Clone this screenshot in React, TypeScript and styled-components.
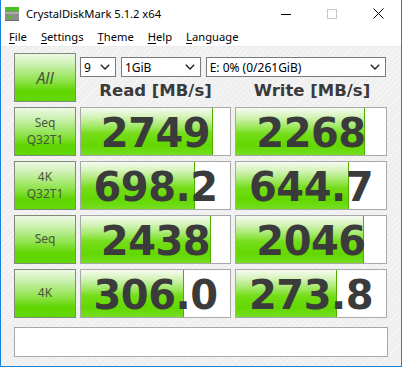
import React from "react";
import styled, { createGlobalStyle } from "styled-components";

const Global = createGlobalStyle`
  html, body { margin: 0; padding: 0; background: #ffffff; }
  body { font-family: "Noto Sans", "Open Sans", sans-serif; }
  * { box-sizing: border-box; }
`;

const Window = styled.div`
  width: 402px;
  height: 367px;
  display: flex;
  flex-direction: column;
  border: 1px solid #1883d7;
  border-top: none;
  background: #ffffff;
  overflow: hidden;
`;

const TitleBar = styled.div`
  height: 27px;
  display: flex;
  align-items: center;
  padding-left: 3px;
  background: #ffffff;
`;

const TitleText = styled.span`
  font-family: "Noto Sans", sans-serif;
  font-size: 11.2px;
  color: #000000;
  margin-left: 6px;
  margin-top: -1px;
  flex: 1;
`;

const Controls = styled.div`
  display: flex;
  height: 100%;
`;

const ControlBtn = styled.div`
  width: 46px;
  height: 100%;
  display: flex;
  align-items: center;
  justify-content: center;
`;

const MenuBar = styled.div`
  height: 20px;
  display: flex;
  align-items: center;
  padding-left: 1px;
  background: #ffffff;
  border-bottom: 1px solid #ececec;
`;

const MenuItem = styled.span`
  font-family: "Noto Sans", sans-serif;
  font-size: 11.2px;
  color: #000;
  padding: 0 7px;
  u { text-decoration: underline; text-underline-offset: 2px; }
`;

const Client = styled.div`
  flex: 1;
  padding: 6px 12px 0 13px;
  background-color: #f1f1f1;
  background-image: repeating-linear-gradient(
    135deg,
    #f6f6f6 0px,
    #f6f6f6 1px,
    #efefef 1px,
    #efefef 4px
  );
  display: flex;
  flex-direction: column;
`;

const Grid = styled.div`
  display: grid;
  grid-template-columns: 62px 151px 152px;
  grid-auto-rows: 49px;
  column-gap: 4px;
  row-gap: 5px;
`;

const TestButton = styled.div<{ $big?: boolean }>`
  border: 1px solid #7f8a78;
  background: linear-gradient(
    to bottom,
    #eef9e6 0%,
    #c8efaa 25%,
    #92e450 55%,
    #5fd500 80%,
    #62d80a 100%
  );
  display: flex;
  flex-direction: column;
  align-items: center;
  justify-content: center;
  font-family: "Noto Sans", sans-serif;
  font-size: ${(p) => (p.$big ? "16px" : "12px")};
  font-style: ${(p) => (p.$big ? "italic" : "normal")};
  line-height: ${(p) => (p.$big ? "18px" : "16.5px")};
  color: #46563c;
`;

const TopArea = styled.div`
  grid-column: 2 / span 2;
  display: flex;
  flex-direction: column;
`;

const SelectRow = styled.div`
  display: flex;
  gap: 5px;
  margin-top: 4px;
  margin-right: 1px;
`;

const Combo = styled.div<{ $w: number }>`
  width: ${(p) => p.$w}px;
  height: 20px;
  border: 1px solid #7a7a7a;
  background: #ffffff;
  display: flex;
  align-items: center;
  justify-content: space-between;
  padding: 0 5px 0 3px;
  font-family: "Noto Sans", sans-serif;
  font-size: 12px;
  color: #000;
`;

const HeaderRow = styled.div`
  display: grid;
  grid-template-columns: 151px 152px;
  column-gap: 5px;
  margin-top: 3px;
`;

const Header = styled.div`
  text-align: center;
  font-family: "DejaVu Sans", sans-serif;
  font-weight: bold;
  font-size: 16.5px;
  color: #3a3a3a;
  line-height: 22px;
`;

const Cell = styled.div`
  position: relative;
  border: 1px solid #a8a8a8;
  background: #ffffff;
  overflow: hidden;
  display: flex;
  align-items: center;
  justify-content: center;
`;

const Bar = styled.div`
  position: absolute;
  left: 0;
  top: 0;
  bottom: 0;
  border-right: 1px solid #4fb000;
  background: linear-gradient(
    to bottom,
    #f6fbf1 0%,
    #d6f3bc 18%,
    #a4e96a 38%,
    #74dd18 55%,
    #63d800 80%,
    #74de22 100%
  );
`;

const Value = styled.span`
  position: relative;
  font-family: "DejaVu Sans", sans-serif;
  font-weight: bold;
  font-size: 40px;
  letter-spacing: -0.5px;
  color: #3b3b3b;
  line-height: 1;
  margin-top: 2px;
`;

const Comment = styled.div`
  margin-top: 9px;
  height: 30px;
  width: 374px;
  border: 1px solid #a8a8a8;
  background: #ffffff;
`;

const Chevron = () => (
  <svg width="10" height="6" viewBox="0 0 10 6">
    <path d="M0.8 0.8 L5 5 L9.2 0.8" fill="none" stroke="#222" strokeWidth="1.4" />
  </svg>
);

const AppIcon = () => (
  <svg width="16" height="16" viewBox="0 0 16 16">
    <rect x="1" y="1" width="14" height="4" fill="#4cc020" />
    <rect x="1" y="5" width="14" height="9" fill="#8a9088" />
    <rect x="1" y="6" width="14" height="2" fill="#a8aea6" />
    <rect x="3" y="10" width="5" height="2" fill="#4cc020" />
    <rect x="1" y="14" width="14" height="1" fill="#6a7068" />
  </svg>
);

type Row = { label: string[]; read: number; write: number; readText: string; writeText: string };

const rows: Row[] = [
  { label: ["Seq", "Q32T1"], read: 2749, write: 2268, readText: "2749", writeText: "2268" },
  { label: ["4K", "Q32T1"], read: 698.2, write: 644.7, readText: "698.2", writeText: "644.7" },
  { label: ["Seq"], read: 2438, write: 2046, readText: "2438", writeText: "2046" },
  { label: ["4K"], read: 306.0, write: 273.8, readText: "306.0", writeText: "273.8" },
];

const barWidth = (v: number) => Math.round(30.4 * Math.log10(v) + 28.4) - 1;

const ResultCell = ({ value, text }: { value: number; text: string }) => (
  <Cell>
    <Bar style={{ width: `${barWidth(value)}px` }} />
    <Value>{text}</Value>
  </Cell>
);

export default function App() {
  return (
    <>
      <Global />
      <Window>
        <TitleBar>
          <AppIcon />
          <TitleText>CrystalDiskMark 5.1.2 x64</TitleText>
          <Controls>
            <ControlBtn>
              <svg width="10" height="10" viewBox="0 0 10 10">
                <path d="M0 5.5 H10" stroke="#000" strokeWidth="1" />
              </svg>
            </ControlBtn>
            <ControlBtn>
              <svg width="10" height="10" viewBox="0 0 10 10">
                <rect x="0.5" y="0.5" width="9" height="9" fill="none" stroke="#c8c8c8" strokeWidth="1" />
              </svg>
            </ControlBtn>
            <ControlBtn>
              <svg width="11" height="11" viewBox="0 0 11 11">
                <path d="M0.5 0.5 L10.5 10.5 M10.5 0.5 L0.5 10.5" stroke="#000" strokeWidth="1" />
              </svg>
            </ControlBtn>
          </Controls>
        </TitleBar>
        <MenuBar>
          <MenuItem><u>F</u>ile</MenuItem>
          <MenuItem><u>S</u>ettings</MenuItem>
          <MenuItem><u>T</u>heme</MenuItem>
          <MenuItem><u>H</u>elp</MenuItem>
          <MenuItem><u>L</u>anguage</MenuItem>
        </MenuBar>
        <Client>
          <Grid>
            <TestButton $big>All</TestButton>
            <TopArea>
              <SelectRow>
                <Combo $w={36}>9<Chevron /></Combo>
                <Combo $w={80}>1GiB<Chevron /></Combo>
                <Combo $w={181}>E: 0% (0/261GiB)<Chevron /></Combo>
              </SelectRow>
              <HeaderRow>
                <Header>Read [MB/s]</Header>
                <Header>Write [MB/s]</Header>
              </HeaderRow>
            </TopArea>
            {rows.map((r) => (
              <React.Fragment key={r.label.join(" ")}>
                <TestButton>
                  {r.label.map((l) => (
                    <span key={l}>{l}</span>
                  ))}
                </TestButton>
                <ResultCell value={r.read} text={r.readText} />
                <ResultCell value={r.write} text={r.writeText} />
              </React.Fragment>
            ))}
          </Grid>
          <Comment />
        </Client>
      </Window>
    </>
  );
}
